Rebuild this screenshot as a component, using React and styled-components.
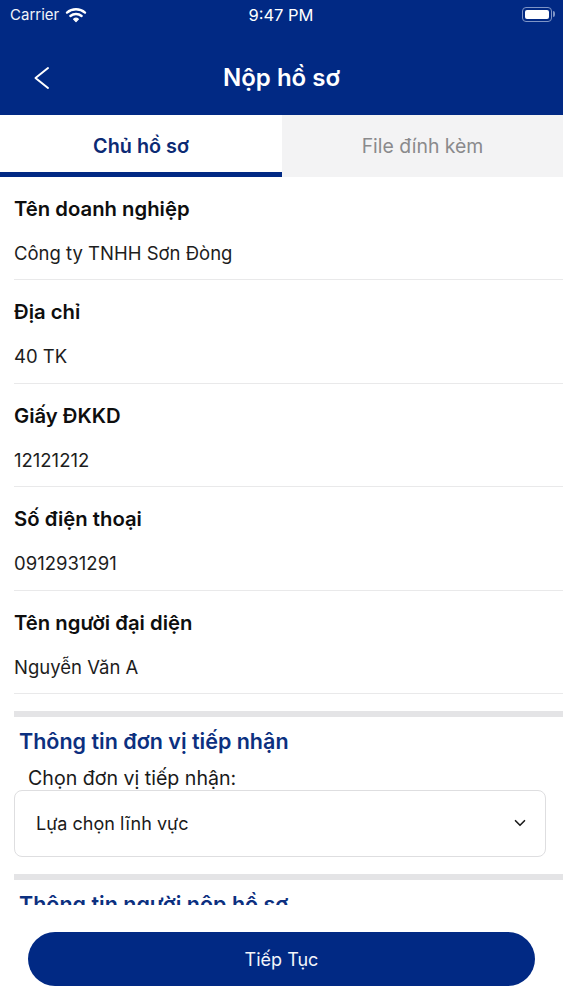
import React from 'react';
import styled, { createGlobalStyle } from 'styled-components';
import { ChevronDown } from 'lucide-react';

const GlobalStyle = createGlobalStyle`
  html, body {
    margin: 0;
    padding: 0;
    background: #fff;
    font-family: Inter, "Noto Sans", sans-serif;
  }
  * {
    box-sizing: border-box;
  }
`;

const fields = [
  { label: 'Tên doanh nghiệp', value: 'Công ty TNHH Sơn Đòng' },
  { label: 'Địa chỉ', value: '40 TK' },
  { label: 'Giấy ĐKKD', value: '12121212' },
  { label: 'Số điện thoại', value: '0912931291' },
  { label: 'Tên người đại diện', value: 'Nguyễn Văn A' },
];

const WifiIcon = () => (
  <svg width="22" height="16" viewBox="0 0 22 16" fill="none" stroke="#fff" strokeLinecap="round">
    <path d="M2 5.6C7 1.2 15 1.2 20 5.6" strokeWidth="2.4" />
    <path d="M5.4 9C8.6 6.3 13.4 6.3 16.6 9" strokeWidth="2.4" />
    <path d="M8.6 12.1C10 11 12 11 13.4 12.1L11 14.6Z" fill="#fff" strokeWidth="1.2" strokeLinejoin="round" />
  </svg>
);

const BackIcon = () => (
  <svg width="18" height="24" viewBox="0 0 18 24" fill="none" stroke="#fff" strokeWidth="2" strokeLinecap="round" strokeLinejoin="round">
    <path d="M15 2L2.5 12L15 22" />
  </svg>
);

const App = () => {
  return (
    <Screen>
      <GlobalStyle />
      <Header>
        <StatusBar>
          <Carrier>
            Carrier <WifiIcon />
          </Carrier>
          <Clock>9:47 PM</Clock>
          <Battery>
            <BatteryLevel />
          </Battery>
        </StatusBar>
        <NavBar>
          <BackButton>
            <BackIcon />
          </BackButton>
          <Title>Nộp hồ sơ</Title>
        </NavBar>
      </Header>
      <Tabs>
        <Tab $active>Chủ hồ sơ</Tab>
        <Tab>File đính kèm</Tab>
      </Tabs>
      <Content>
        {fields.map((item) => (
          <Field key={item.label}>
            <FieldLabel>{item.label}</FieldLabel>
            <FieldValue>{item.value}</FieldValue>
          </Field>
        ))}
        <SectionBar />
        <SectionTitle>Thông tin đơn vị tiếp nhận</SectionTitle>
        <SelectLabel>Chọn đơn vị tiếp nhận:</SelectLabel>
        <Select>
          <span>Lựa chọn lĩnh vực</span>
          <ChevronDown size={18} strokeWidth={2.2} color="#1c1c1c" />
        </Select>
        <SectionBar />
        <SectionTitle>Thông tin người nộp hồ sơ</SectionTitle>
      </Content>
      <Footer>
        <SubmitButton>Tiếp Tục</SubmitButton>
      </Footer>
    </Screen>
  );
};

export default App;

const Screen = styled.div`
  display: flex;
  flex-direction: column;
  width: 563px;
  height: 1000px;
  overflow: hidden;
  background: #fff;
`;

const Header = styled.header`
  height: 115px;
  background: #012984;
  color: #fff;
`;

const StatusBar = styled.div`
  display: grid;
  grid-template-columns: 1fr auto 1fr;
  align-items: center;
  height: 29px;
  padding: 0 11px 0 10px;
`;

const Carrier = styled.div`
  display: flex;
  align-items: center;
  gap: 6px;
  font-size: 15px;
  color: #f1f3f9;
`;

const Clock = styled.div`
  font-size: 16.5px;
  font-weight: 400;
`;

const Battery = styled.div`
  position: relative;
  justify-self: end;
  width: 30px;
  height: 15px;
  padding: 2px;
  border: 1px solid #7f95c6;
  border-radius: 4px;

  &::after {
    content: '';
    position: absolute;
    right: -4px;
    top: 3px;
    width: 2px;
    height: 6px;
    border-radius: 0 2px 2px 0;
    background: #7f95c6;
  }
`;

const BatteryLevel = styled.div`
  width: 100%;
  height: 100%;
  background: #fff;
  border-radius: 2px;
`;

const NavBar = styled.div`
  position: relative;
  display: flex;
  align-items: center;
  justify-content: center;
  height: 86px;
  padding-top: 10px;
`;

const BackButton = styled.div`
  position: absolute;
  left: 33px;
  top: 37px;
  display: flex;
`;

const Title = styled.h1`
  margin: 0;
  font-size: 24px;
  font-weight: 600;
`;

const Tabs = styled.div`
  display: grid;
  grid-template-columns: 282px 1fr;
  height: 62px;
`;

const Tab = styled.div`
  display: flex;
  align-items: center;
  justify-content: center;
  font-size: ${(p) => (p.$active ? '19.8px' : '19.4px')};
  font-weight: ${(p) => (p.$active ? 600 : 400)};
  color: ${(p) => (p.$active ? '#0c2a74' : '#8a8a8c')};
  background: ${(p) => (p.$active ? '#fff' : '#f3f3f4')};
  box-shadow: ${(p) => (p.$active ? 'inset 0 -5px 0 #012984' : 'none')};
`;

const Content = styled.main`
  flex: 1;
  min-height: 0;
  overflow: hidden;
  padding-left: 14px;
`;

const Field = styled.div`
  height: 103.4px;
  padding-top: 20px;
  border-bottom: 1.5px solid #e9e9ea;
`;

const FieldLabel = styled.div`
  font-size: 20.3px;
  line-height: 24px;
  font-weight: 600;
  color: #0e0e0e;
`;

const FieldValue = styled.div`
  margin-top: 20px;
  font-size: 18.5px;
  line-height: 24px;
  color: #1d1d1d;
`;

const SectionBar = styled.div`
  height: 6px;
  margin-top: 17px;
  background: #e4e4e6;
`;

const SectionTitle = styled.h2`
  margin: 11px 0 0 5px;
  font-size: 21.5px;
  line-height: 26px;
  font-weight: 600;
  color: #0c3080;
`;

const SelectLabel = styled.div`
  margin: 12px 0 0 14px;
  font-size: 19.6px;
  line-height: 24px;
  color: #1a1a1a;
`;

const Select = styled.div`
  display: flex;
  align-items: center;
  justify-content: space-between;
  width: 532px;
  height: 67px;
  padding: 0 16px 0 21px;
  border: 1px solid #dedee0;
  border-radius: 8px;
  font-size: 18px;
  color: #1a1a1a;
`;

const Footer = styled.footer`
  display: flex;
  justify-content: center;
  height: 95px;
  padding-top: 27px;
`;

const SubmitButton = styled.button`
  width: 507px;
  height: 54px;
  border: none;
  border-radius: 27px;
  background: #012984;
  color: #f3f5fa;
  font-family: inherit;
  font-size: 18px;
`;
